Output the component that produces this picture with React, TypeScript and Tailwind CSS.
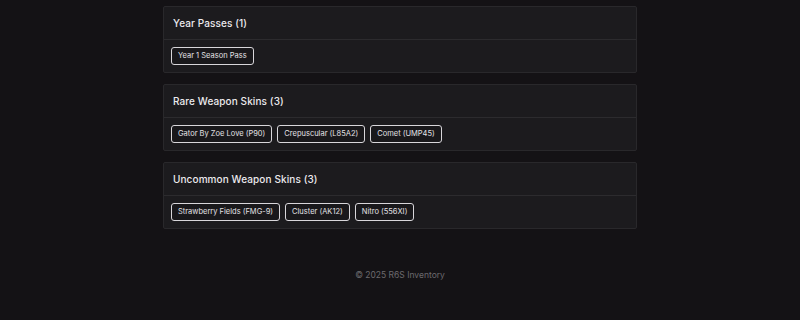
const sections = [
  { title: "Year Passes", items: ["Year 1 Season Pass"] },
  {
    title: "Rare Weapon Skins",
    items: ["Gator By Zoe Love (P90)", "Crepuscular (L85A2)", "Comet (UMP45)"],
  },
  {
    title: "Uncommon Weapon Skins",
    items: ["Strawberry Fields (FMG-9)", "Cluster (AK12)", "Nitro (556XI)"],
  },
];

export default function App() {
  return (
    <div
      className="min-h-[320px] w-full bg-[#141215] text-[#e8e6ea]"
      style={{ fontFamily: "Inter, 'Noto Sans', sans-serif" }}
    >
      <main className="mx-auto w-[474px] pt-[6px] flex flex-col gap-[11px]">
        {sections.map((s) => (
          <section
            key={s.title}
            className="bg-[#1c1b1e] border border-[#29282b] rounded-[2px]"
          >
            {/* Header */}
            <div className="h-[33px] px-[9px] pt-[1px] flex items-center border-b border-[#2c2b2e]">
              <h2 className="text-[10px] font-medium tracking-[0.01em] text-[#eceaee]">
                {s.title} ({s.items.length})
              </h2>
            </div>

            {/* Items */}
            <div className="h-[32px] px-[7px] flex items-center gap-[5px]">
              {s.items.map((item) => (
                <span
                  key={item}
                  className="h-[18px] px-[6px] flex items-center rounded-[3px] border-[1.5px] border-[#d8d6da] bg-[#19181b] text-[7.5px] text-[#e4e2e6] whitespace-nowrap"
                >
                  {item}
                </span>
              ))}
            </div>
          </section>
        ))}
      </main>

      <footer className="pt-[40px] text-center text-[8.5px] text-[#6c6a6e]">
        © 2025 R6S Inventory
      </footer>
    </div>
  );
}
